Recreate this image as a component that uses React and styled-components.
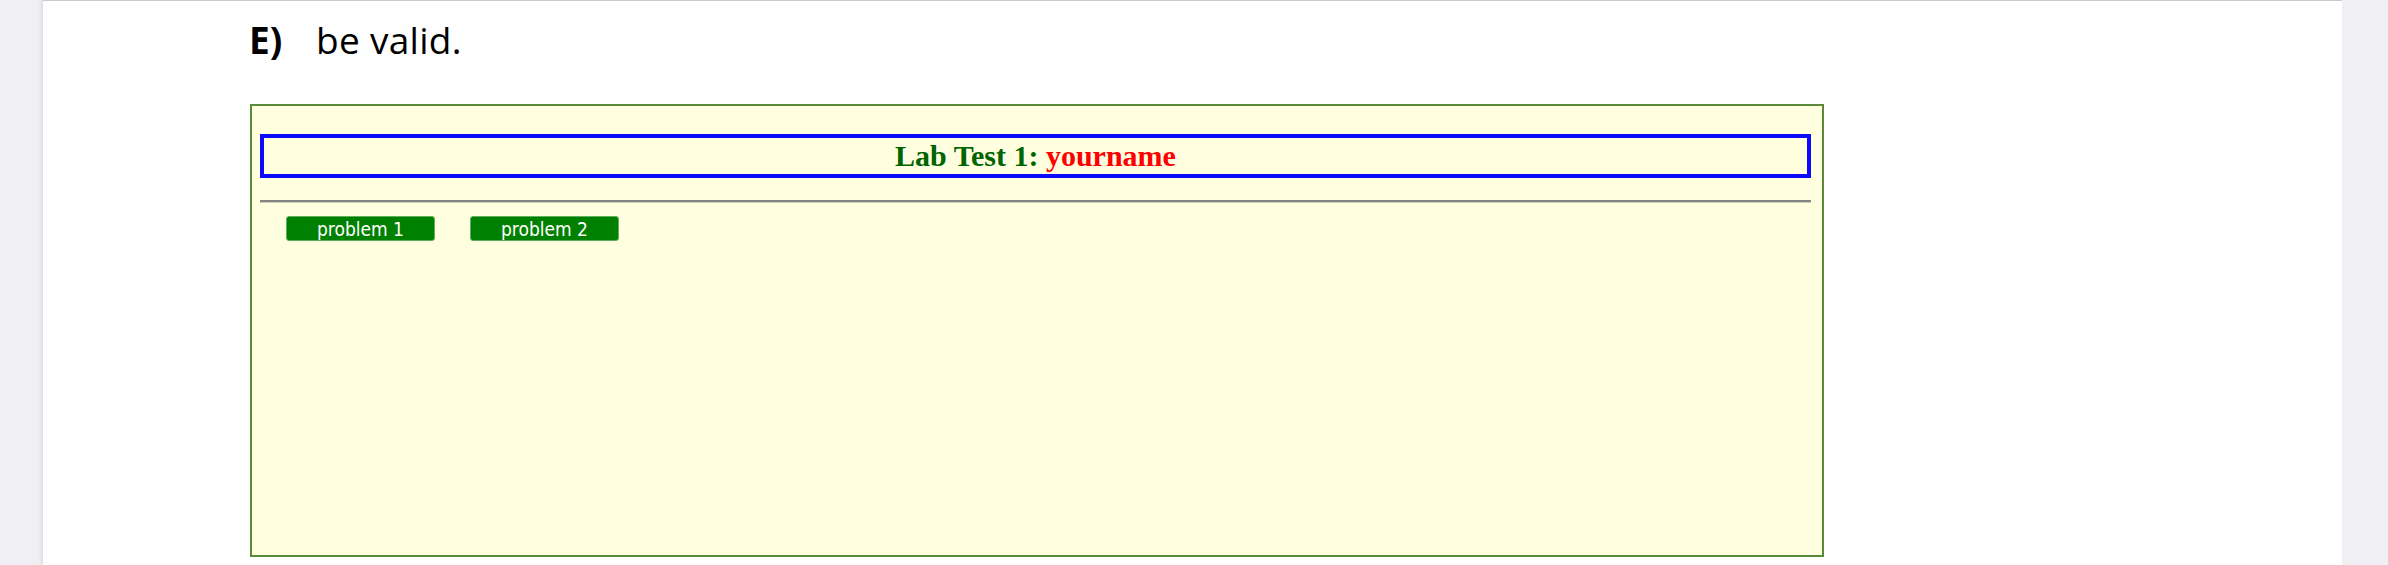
import React from 'react'
import styled, { createGlobalStyle } from 'styled-components';

const Global = createGlobalStyle`
html, body {
  margin: 0;
  padding: 0;
  background: #f0eff4;
}
#root {
  height: 565px;
  overflow: hidden;
}
`

const Viewer = styled.div`
display: flex;
height: 565px;
background: #f0eff4;
`

const Gutter = styled.div`
width: ${p => p.w}px;
flex: none;
background: #f0eff4;
`

const Sheet = styled.div`
width: 2299px;
flex: none;
background: #ffffff;
border-top: 1px solid #c9c9c9;
box-shadow: 0 0 5px rgba(0, 0, 0, 0.18);
padding-left: 207px;
box-sizing: border-box;
overflow: hidden;
`

const Question = styled.div`
display: flex;
align-items: baseline;
padding-top: 14px;
line-height: 50px;
font-family: "Open Sans", "Noto Sans", sans-serif;
font-size: 37px;
color: #000;
`

const Letter = styled.span`
font-weight: 700;
min-width: 67px;
margin-left: -1px;
`

const Answer = styled.span`
font-weight: 400;
letter-spacing: 0.3px;
`

// embedded page shot
const LabFrame = styled.div`
margin-top: 39px;
width: 1574px;
height: 453px;
box-sizing: border-box;
border: 2px solid #5a8a3a;
background: #ffffe0;
padding: 28px 11px 0 8px;
`

const TitleBar = styled.div`
border: 4px solid #0a0aff;
padding: 1px 0;
text-align: center;
font-family: "Liberation Serif", "Times New Roman", serif;
font-weight: 700;
font-size: 30px;
line-height: 34px;
color: #006400;
`

const Name = styled.span`
color: #ff0000;
`

const Rule = styled.hr`
margin: 22px 0 13px;
height: 0;
border: none;
border-top: 2px solid #858585;
border-bottom: 1px solid #cfcfb8;
`

const ButtonRow = styled.div`
display: flex;
gap: 35px;
padding-left: 26px;
`

const ProblemButton = styled.button`
width: 149px;
height: 25px;
padding: 2px 0 0;
box-sizing: border-box;
background: #008000;
color: #ffffff;
border: 1px solid #5faf5f;
border-radius: 3px;
font-family: "DejaVu Sans Condensed", "DejaVu Sans", sans-serif;
font-stretch: condensed;
font-size: 19px;
line-height: 21px;
cursor: pointer;
`

const App = () => {
    return (
        <>
            <Global />
            <Viewer>
                <Gutter w={43} />
                <Sheet>
                    <Question>
                        <Letter>E)</Letter>
                        <Answer>be valid.</Answer>
                    </Question>
                    <LabFrame>
                        <TitleBar>
                            Lab Test 1: <Name>yourname</Name>
                        </TitleBar>
                        <Rule />
                        <ButtonRow>
                            <ProblemButton>problem 1</ProblemButton>
                            <ProblemButton>problem 2</ProblemButton>
                        </ButtonRow>
                    </LabFrame>
                </Sheet>
                <Gutter w={46} />
            </Viewer>
        </>
    )
}

export default App
